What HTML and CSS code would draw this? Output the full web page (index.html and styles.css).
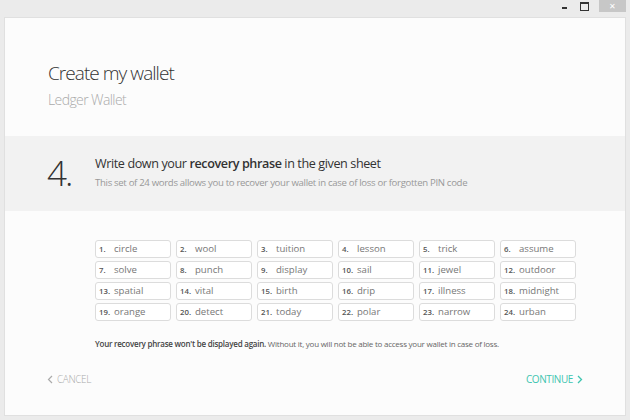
FILE: index.html
```html
<!DOCTYPE html>
<html>
<head>
<meta charset="utf-8">
<link rel="stylesheet" href="styles.css">
</head>
<body>
<div class="titlebar">
  <span class="ctl min"></span>
  <span class="ctl max"></span>
  <span class="ctl close">&#x2715;</span>
</div>
<div class="card">
  <header class="head">
    <h1>Create my wallet</h1>
    <p class="sub">Ledger Wallet</p>
  </header>
  <section class="step">
    <div class="num">4.</div>
    <div class="stext">
      <h2>Write down your <b>recovery phrase</b> in the given sheet</h2>
      <p>This set of 24 words allows you to recover your wallet in case of loss or forgotten PIN code</p>
    </div>
  </section>
  <section class="words">
    <div class="grid">
      <div class="w"><span class="n">1.</span>circle</div>
      <div class="w"><span class="n">2.</span>wool</div>
      <div class="w"><span class="n">3.</span>tuition</div>
      <div class="w"><span class="n">4.</span>lesson</div>
      <div class="w"><span class="n">5.</span>trick</div>
      <div class="w"><span class="n">6.</span>assume</div>
      <div class="w"><span class="n">7.</span>solve</div>
      <div class="w"><span class="n">8.</span>punch</div>
      <div class="w"><span class="n">9.</span>display</div>
      <div class="w"><span class="n">10.</span>sail</div>
      <div class="w"><span class="n">11.</span>jewel</div>
      <div class="w"><span class="n">12.</span>outdoor</div>
      <div class="w"><span class="n">13.</span>spatial</div>
      <div class="w"><span class="n">14.</span>vital</div>
      <div class="w"><span class="n">15.</span>birth</div>
      <div class="w"><span class="n">16.</span>drip</div>
      <div class="w"><span class="n">17.</span>illness</div>
      <div class="w"><span class="n">18.</span>midnight</div>
      <div class="w"><span class="n">19.</span>orange</div>
      <div class="w"><span class="n">20.</span>detect</div>
      <div class="w"><span class="n">21.</span>today</div>
      <div class="w"><span class="n">22.</span>polar</div>
      <div class="w"><span class="n">23.</span>narrow</div>
      <div class="w"><span class="n">24.</span>urban</div>
    </div>
    <p class="warn"><b>Your recovery phrase won't be displayed again.</b> Without it, you will not be able to access your wallet in case of loss.</p>
  </section>
  <footer class="foot">
    <a class="btn cancel"><svg width="6" height="9" viewBox="0 0 6 9"><path d="M5 1L1.5 4.5L5 8" fill="none" stroke="currentColor" stroke-width="1.2"/></svg>CANCEL</a>
    <a class="btn cont">CONTINUE<svg width="6" height="9" viewBox="0 0 6 9"><path d="M1 1L4.5 4.5L1 8" fill="none" stroke="currentColor" stroke-width="1.3"/></svg></a>
  </footer>
</div>
</body>
</html>
```
FILE: styles.css
```css
* { box-sizing: border-box; }
html, body { margin: 0; padding: 0; }
body {
  width: 630px;
  height: 420px;
  background: #ebebeb;
  font-family: "Open Sans", "Liberation Sans", sans-serif;
  overflow: hidden;
}
.titlebar {
  height: 17px;
  display: flex;
  justify-content: flex-end;
  align-items: flex-start;
  padding-right: 4px;
}
.ctl {
  display: block;
  height: 12px;
  position: relative;
}
.min { width: 20px; }
.min::after {
  content: "";
  position: absolute;
  left: 6px; top: 7px;
  width: 5px; height: 2px;
  background: #333;
}
.max { width: 21px; }
.max::after {
  content: "";
  position: absolute;
  left: 4px; top: 2px;
  width: 7px; height: 6px;
  border: 1px solid #333;
  border-top-width: 2px;
}
.close {
  width: 27px;
  background: #c7c7c7;
  color: #fff;
  font-size: 8px;
  line-height: 12px;
  text-align: center;
  margin-left: 2px;
}
.card {
  margin: 0 4px 0 4px;
  height: 399px;
  background: #fcfcfc;
  border: 1px solid #e0e0e0;
  display: flex;
  flex-direction: column;
}
.head {
  padding: 42px 0 0 43px;
  height: 118px;
}
.head h1 {
  margin: 0;
  font-weight: 300;
  font-size: 19px;
  color: #333;
  letter-spacing: -0.95px;
  line-height: 26px;
}
.sub {
  margin: 4px 0 0;
  font-weight: 300;
  font-size: 14px;
  color: #aaa;
  letter-spacing: -0.6px;
  line-height: 20px;
}
.step {
  background: #f2f2f2;
  height: 75px;
  display: flex;
  align-items: flex-start;
  padding: 19px 0 0 42px;
}
.num {
  font-weight: 300;
  font-size: 35px;
  line-height: 36px;
  color: #333;
  width: 48px;
  letter-spacing: -2px;
}
.stext h2 {
  margin: 0;
  font-weight: 400;
  font-size: 12.6px;
  color: #333;
  line-height: 18px;
  letter-spacing: -0.4px;
}
.stext h2 b { font-weight: 600; }
.stext p {
  margin: 3px 0 0;
  font-weight: 400;
  font-size: 9.6px;
  color: #999;
  line-height: 14px;
  letter-spacing: -0.32px;
}
.words {
  padding: 29px 0 0 90px;
  height: 153px;
}
.grid {
  display: grid;
  grid-template-columns: repeat(6, 76px);
  grid-auto-rows: 18px;
  column-gap: 5px;
  row-gap: 3px;
}
.w {
  border: 1px solid #dcdcdc;
  border-radius: 3px;
  background: #fff;
  font-size: 9.6px;
  color: #777;
  line-height: 16px;
  padding-left: 3px;
  white-space: nowrap;
}
.n {
  display: inline-block;
  width: 15px;
  font-size: 7.8px;
  font-weight: 600;
  color: #555;
}
.warn {
  margin: 17px 0 0 0;
  font-size: 8px;
  color: #666;
  letter-spacing: -0.24px;
  line-height: 12px;
}
.warn b { font-weight: 600; color: #444; }
.foot {
  display: flex;
  justify-content: space-between;
  padding: 0 42px 0 42px;
  height: 30px;
  align-items: center;
}
.btn {
  font-size: 10px;
  letter-spacing: -0.4px;
  display: flex;
  align-items: center;
  gap: 4px;
}
.cancel { color: #aaa; font-weight: 300; }
.cont { color: #3ec5b0; font-weight: 400; }
```
